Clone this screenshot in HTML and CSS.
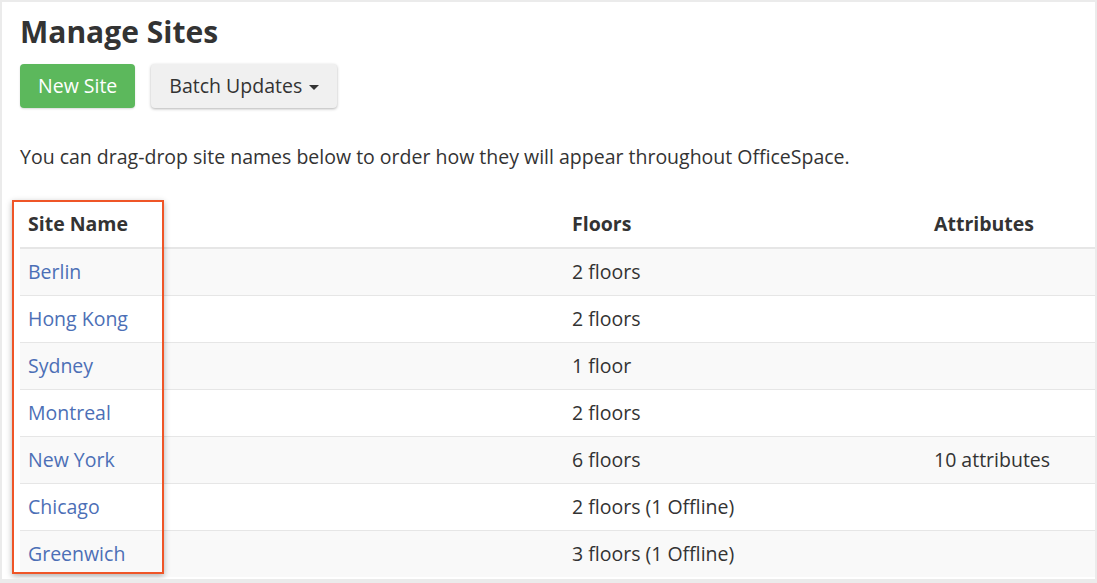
FILE: index.html
```html
<!DOCTYPE html>
<html lang="en">
<head>
    <meta charset="UTF-8">
    <title>Manage Sites</title>
    <link rel="stylesheet" href="styles.css">
</head>
<body>
    <div class="panel">
        <h1 class="page-title">Manage Sites</h1>
        <div class="actions">
            <button class="btn btn-success">New Site</button>
            <button class="btn btn-default">Batch Updates <span class="caret"></span></button>
        </div>

        <p class="hint">You can drag-drop site names below to order how they will appear throughout OfficeSpace.</p>

        <div class="table-wrap">
            <table class="sites">
                <thead>
                    <tr>
                        <th class="col-name">Site Name</th>
                        <th class="col-floors">Floors</th>
                        <th>Attributes</th>
                    </tr>
                </thead>
                <tbody>
                    <tr><td><a href="#">Berlin</a></td><td>2 floors</td><td></td></tr>
                    <tr><td><a href="#">Hong Kong</a></td><td>2 floors</td><td></td></tr>
                    <tr><td><a href="#">Sydney</a></td><td>1 floor</td><td></td></tr>
                    <tr><td><a href="#">Montreal</a></td><td>2 floors</td><td></td></tr>
                    <tr><td><a href="#">New York</a></td><td>6 floors</td><td>10 attributes</td></tr>
                    <tr><td><a href="#">Chicago</a></td><td>2 floors (1 Offline)</td><td></td></tr>
                    <tr><td><a href="#">Greenwich</a></td><td>3 floors (1 Offline)</td><td></td></tr>
                </tbody>
            </table>
            <!-- annotation around the first column -->
            <div class="highlight"></div>
        </div>
    </div>
</body>
</html>
```

FILE: styles.css
```css
/* Variables */
:root {
    --text-color: #333;
    --link-color: #4c6fb6;
    --success-color: #5cb85c;
    --stripe-color: #f9f9f9;
    --border-color: #e6e6e6;
    --frame-color: #ebebeb;
    --highlight-color: #ef5527;
}

* {
    margin: 0;
    padding: 0;
    box-sizing: border-box;
}

body {
    font-family: "Open Sans", "Liberation Sans", sans-serif;
    font-size: 19.5px;
    line-height: 26px;
    color: var(--text-color);
    background: var(--frame-color);
    height: 583px;
    overflow: hidden;
}

/* White page panel */
.panel {
    background: #fff;
    margin: 2px 2px 0 2px;
    width: 1093px;
    height: 577px;
    padding: 13px 0 0 18px;
    overflow: hidden;
}

.page-title {
    font-size: 30px;
    line-height: 33px;
    font-weight: 700;
}

/* Buttons */
.actions {
    display: flex;
    gap: 16px;
    margin-top: 16px;
}

.btn {
    font-family: inherit;
    font-size: 19.5px;
    line-height: 24px;
    height: 44px;
    padding: 10px 18px;
    border: none;
    border-radius: 4px;
    cursor: pointer;
}

.btn-success {
    background: var(--success-color);
    color: #fff;
    box-shadow: 0 1px 2px rgba(0, 0, 0, 0.15);
}

.btn-default {
    background: #f0f0f0;
    color: var(--text-color);
    box-shadow: 0 1px 3px rgba(0, 0, 0, 0.3);
}

.caret {
    display: inline-block;
    width: 0;
    height: 0;
    margin-left: 2px;
    vertical-align: middle;
    border-top: 5px solid var(--text-color);
    border-left: 5px solid transparent;
    border-right: 5px solid transparent;
}

.hint {
    margin-top: 36px;
}

/* Sites table */
.table-wrap {
    position: relative;
    margin-top: 31px;
}

.sites {
    width: 1180px;
    border-collapse: collapse;
}

.sites th,
.sites td {
    text-align: left;
    padding: 10px 8px;
    vertical-align: top;
}

.sites th {
    font-weight: 700;
    border-bottom: 2px solid var(--border-color);
}

.sites td {
    border-top: 1px solid var(--border-color);
}

.sites thead + tbody tr:first-child td {
    border-top: none;
}

.sites tbody tr:nth-child(odd) {
    background: var(--stripe-color);
}

.col-name {
    width: 544px;
}

.col-floors {
    width: 362px;
}

.sites a {
    color: var(--link-color);
    text-decoration: none;
}

.highlight {
    position: absolute;
    left: -8px;
    top: -1px;
    width: 152px;
    height: 374px;
    border: 2px solid var(--highlight-color);
    box-shadow: 0 2px 6px rgba(0, 0, 0, 0.3);
    pointer-events: none;
}
```
